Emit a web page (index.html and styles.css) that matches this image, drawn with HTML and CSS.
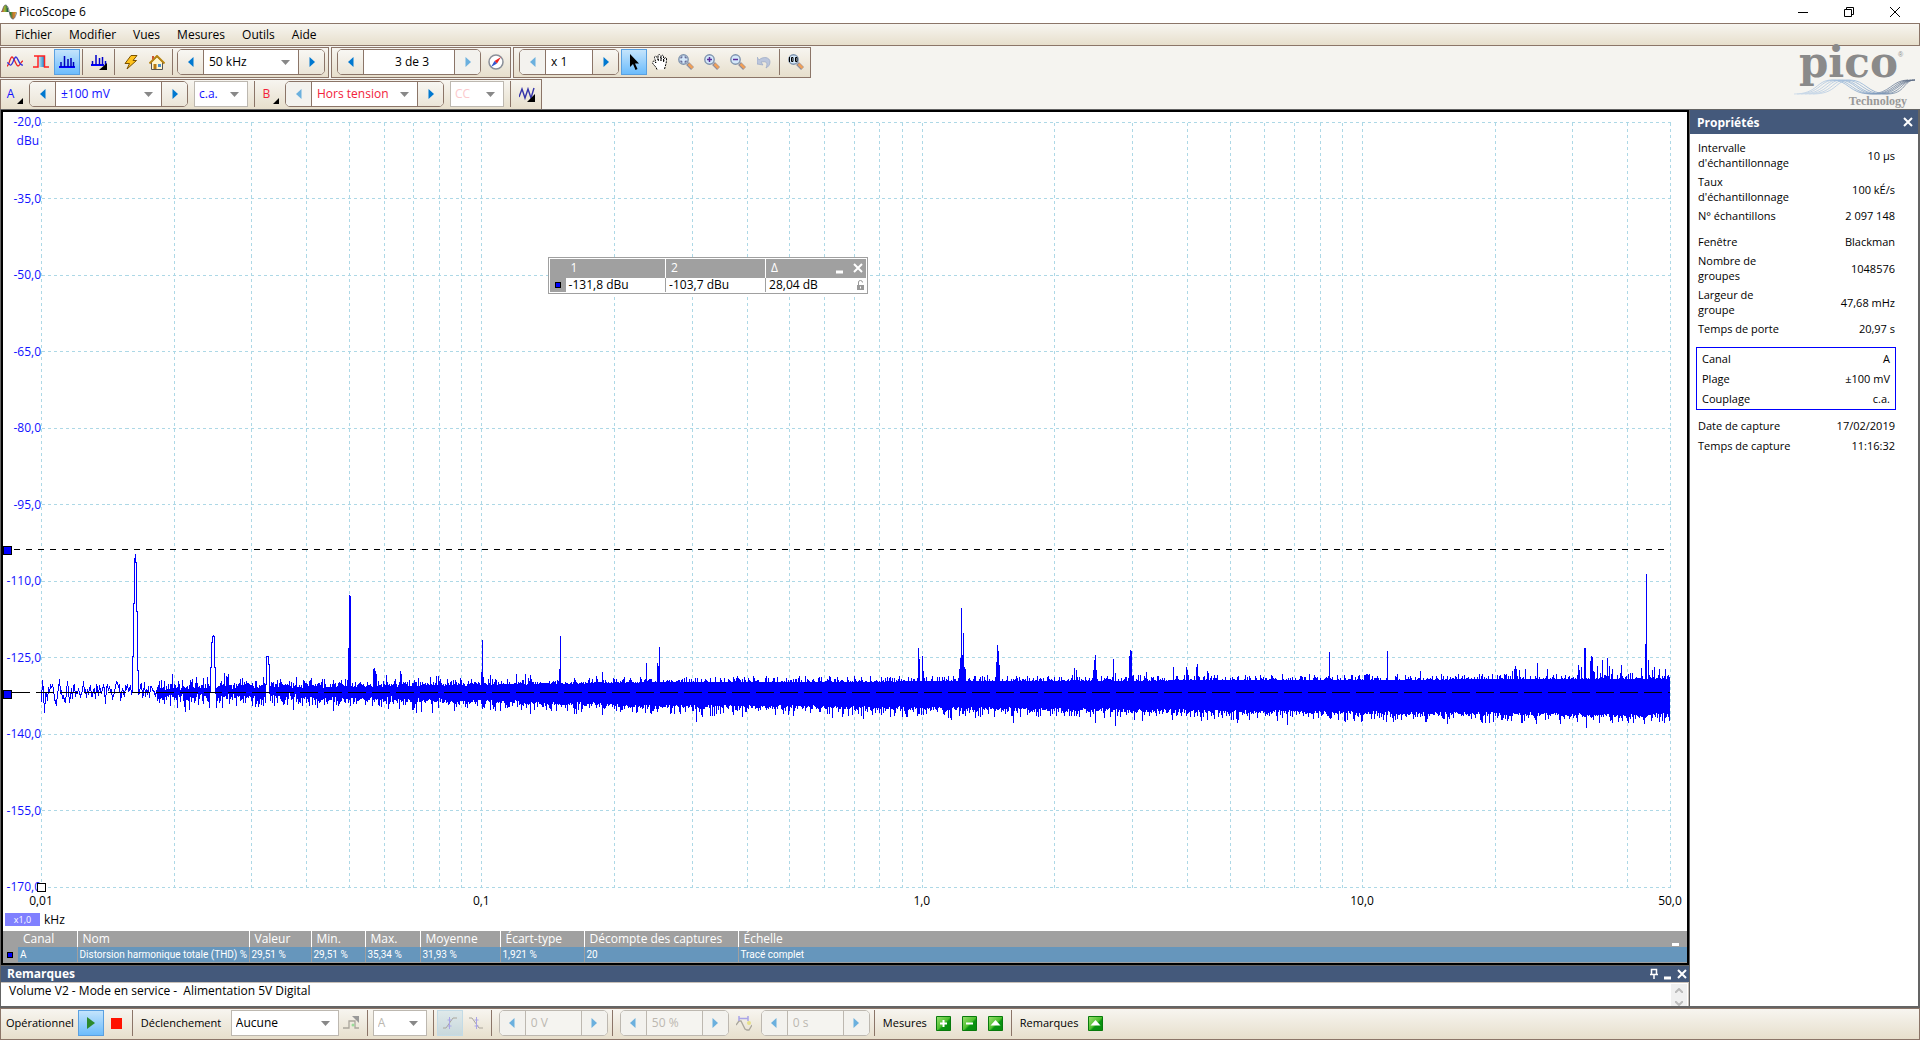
FILE: index.html
```
<!DOCTYPE html>
<html lang="fr">
<head>
<meta charset="utf-8">
<link rel="stylesheet" href="styles.css">
<title>PicoScope 6</title>
</head>
<body>
<svg width="0" height="0" class="defs">
  <defs>
    <linearGradient id="rainbow">
      <stop offset="0" stop-color="#d33"/><stop offset=".25" stop-color="#9b3"/><stop offset=".45" stop-color="#154"/>
      <stop offset=".6" stop-color="#283"/><stop offset=".8" stop-color="#c73"/><stop offset="1" stop-color="#c9a227"/>
    </linearGradient>
    <linearGradient id="green" x2="1" y2="1">
      <stop offset="0" stop-color="#9be070"/><stop offset=".5" stop-color="#4fc030"/><stop offset=".6" stop-color="#0a9410"/><stop offset="1" stop-color="#088c0c"/>
    </linearGradient>
    <linearGradient id="pulse"><stop offset="0" stop-color="#fff"/><stop offset="1" stop-color="#1f8fd0"/></linearGradient>
    <linearGradient id="swoosh"><stop offset="0" stop-color="#c8d8e8"/><stop offset=".5" stop-color="#8fb0d4"/><stop offset="1" stop-color="#5c6a82"/></linearGradient>
    <symbol id="lens" viewBox="0 0 16 16">
      <path d="M9.500 9.500l5 5" stroke="#8c8c9c" stroke-width="4"/>
      <path d="M10.500 10l4 4" stroke="#f0a058" stroke-width="2.500"/>
      <circle cx="5.500" cy="5.500" r="4.700" fill="#d4e8fa" stroke="#7f93ad" stroke-width="1.400"/>
    </symbol>
    <symbol id="left" viewBox="0 0 6 10"><path d="M5.500 0v10L0 5z" fill="currentColor"/></symbol>
    <symbol id="right" viewBox="0 0 6 10"><path d="M.5 0v10L6 5z" fill="currentColor"/></symbol>
  </defs>
</svg>

<div class="titlebar">
  <svg width="16" height="16" viewBox="0 0 16 16"><path d="M0 8C2 7 2 1 4.500 1S7.500 8 8 8h7.500c-1 0-1 7-3.500 7S8.500 8 8 8z" fill="url(#rainbow)"/><path d="M0 8C2 7 2 1 4.500 1S8 6 8.500 9s1.500 6 3.500 6 3-5 4-7" fill="none" stroke="#556" stroke-width=".7"/></svg>
  <h1>PicoScope 6</h1>
  <div class="window-buttons">
    <button aria-label="Réduire"><svg width="12" height="12"><path d="M1 6.500h10" stroke="#000"/></svg></button>
    <button aria-label="Restaurer"><svg width="12" height="12"><path d="M1.500 3.500h7v7h-7zM3.500 3V1.500h7v7H9" fill="none" stroke="#000"/></svg></button>
    <button aria-label="Fermer"><svg width="12" height="12"><path d="M1 1l10 10M11 1L1 11" stroke="#000"/></svg></button>
  </div>
</div>

<nav class="menubar">
  <a href="#">Fichier</a>
  <a href="#">Modifier</a>
  <a href="#">Vues</a>
  <a href="#">Mesures</a>
  <a href="#">Outils</a>
  <a href="#">Aide</a>
</nav>

<header class="toolbars">
  <div class="rows">
    <div class="row">
      <div class="toolbar">
        <button class="tool" aria-label="Mode oscilloscope"><svg width="16" height="12"><path d="M0 10C2 10 3 1 5 1s4 9 6 9 3-5 5-5" fill="none" stroke="#e22" stroke-width="1.300"/><path d="M0 7C2 6 2 10 4 9S7 1 9 1s3 9 7 8" fill="none" stroke="#33d" stroke-width="1.300"/></svg></button>
        <button class="tool" aria-label="Mode persistance"><svg width="16" height="14"><path d="M4 1h7v11H5z" fill="url(#pulse)"/><path d="M0 12h5V1H1M4 1h7.500v11H16" fill="none" stroke="#f22" stroke-width="1.500"/></svg></button>
        <button class="tool on" aria-label="Mode spectre"><svg width="16" height="14"><path d="M0 12h16" stroke="#00f" stroke-width="2"/><path d="M2 12V7M5.500 12V1M9 12V4M12 12V3M14.500 12V7" stroke="#00b" stroke-width="1.500"/></svg></button>
        <i class="sep"></i>
        <button class="tool" aria-label="Options du spectre"><svg width="17" height="15"><path d="M0 10h13" stroke="#00f" stroke-width="2"/><path d="M1.500 10V6M5 10V0M8.500 10V3M11.500 10V2M14.500 10V6" stroke="#00c" stroke-width="1.500"/><path d="M16 8v7H8z" fill="#000"/></svg></button>
        <i class="sep"></i>
        <button class="tool" aria-label="Configuration automatique"><svg width="14" height="15"><path d="M7 .5h6L9 5.500h3.500L3 14l2.500-5.500H1z" fill="#ffc21c" stroke="#7a5200"/></svg></button>
        <button class="tool" aria-label="Accueil"><svg width="16" height="15"><path d="M2.500 7v7.500h11V7L8 1.500z" fill="#fff6cf" stroke="#555"/><path d="M.5 8.500L8 1l7.500 7.500" fill="none" stroke="#b88510" stroke-width="2"/><path d="M3 5V1h2v2" fill="#c53"/><path d="M4.500 9h3v5h-3z" fill="#b77a10"/><path d="M9 9h3v3H9z" fill="#4a90d0"/></svg></button>
        <i class="sep"></i>
        <div class="spin">
          <button aria-label="Précédent"><svg width="6" height="10"><use href="#left"/></svg></button>
          <select class="w-range" aria-label="Plage de fréquences"><option>50 kHz</option></select>
          <button aria-label="Suivant"><svg width="6" height="10"><use href="#right"/></svg></button>
        </div>
      </div>
      <div class="toolbar">
        <div class="spin">
          <button aria-label="Tampon précédent"><svg width="6" height="10"><use href="#left"/></svg></button>
          <input class="w-buffer" type="text" value="3 de 3" aria-label="Tampon">
          <button disabled aria-label="Tampon suivant"><svg width="6" height="10"><use href="#right"/></svg></button>
        </div>
        <button class="tool" aria-label="Navigateur de tampons"><svg width="16" height="16"><circle cx="8" cy="8" r="7" fill="#fff" stroke="#8a8f98" stroke-width="1.500"/><path d="M13 3L9 9.500 6.500 7z" fill="#e22"/><path d="M3 13l3.500-6L9 9.500z" fill="#35c"/></svg></button>
      </div>
      <div class="toolbar">
        <div class="spin">
          <button disabled aria-label="Zoom précédent"><svg width="6" height="10"><use href="#left"/></svg></button>
          <input class="w-zoom" type="text" value="x 1" aria-label="Zoom">
          <button aria-label="Zoom suivant"><svg width="6" height="10"><use href="#right"/></svg></button>
        </div>
        <button class="tool on" aria-label="Sélection"><svg width="10" height="16"><path d="M1 0v13l3-3 2.500 6 2-1L6 9.500h4z" fill="#000"/></svg></button>
        <button class="tool" aria-label="Main"><svg width="16" height="17"><path d="M5 15.500C4 12 .5 10.500.5 8.500S2.500 7 4 9L2.500 3.500c0-2 2-1.500 2.500 0L6.500 7 6 2c0-2 2-2 2.500 0L9 7l.5-4.500c.5-2 2-1.500 2 0V8l1-3.500c.5-1.500 2-1 2 .5C14.500 10 13 12 12.500 15.500" fill="#fff" stroke="#000" stroke-dasharray="2 1"/></svg></button>
        <button class="tool" aria-label="Zoom fenêtre"><svg width="16" height="16"><use href="#lens"/><path d="M4.500 3H3v1.500M3 6.500V8h1.500M6.500 3H8v1.500M8 6.500V8H6.500" fill="none" stroke="#447"/></svg></button>
        <button class="tool" aria-label="Zoom avant"><svg width="16" height="16"><use href="#lens"/><path d="M3 5.500h5M5.500 3v5" stroke="#5a2d9a" stroke-width="1.500"/></svg></button>
        <button class="tool" aria-label="Zoom arrière"><svg width="16" height="16"><use href="#lens"/><path d="M3 5.500h5" stroke="#5a2d9a" stroke-width="1.500"/></svg></button>
        <button class="tool" disabled aria-label="Annuler le zoom"><svg width="15" height="14"><path d="M2 5c4-4 11-3 11 2 0 3-2 5-4 6 2-5 1-7-5-6l2 3-6-1V2z" fill="#bcc6dc" stroke="#9aa8c4" stroke-width=".7"/></svg></button>
        <i class="sep"></i>
        <button class="tool" aria-label="Zoom 100 %"><svg width="16" height="16"><use href="#lens"/><path d="M1.500 3v5M3.500 3.500h1.500v4H3.500zM7.500 3.500H9v4H7.500z" fill="none" stroke="#000"/></svg></button>
      </div>
    </div>
    <div class="row">
      <div class="toolbar">
        <button class="channel a">A<i></i></button>
        <div class="spin">
          <button aria-label="Plage A inférieure"><svg width="6" height="10"><use href="#left"/></svg></button>
          <select class="w-channel a" aria-label="Plage A"><option>±100 mV</option></select>
          <button aria-label="Plage A supérieure"><svg width="6" height="10"><use href="#right"/></svg></button>
        </div>
        <select class="box w-coupling a" aria-label="Couplage A"><option>c.a.</option></select>
        <i class="sep"></i>
        <button class="channel b">B<i></i></button>
        <div class="spin">
          <button disabled aria-label="Plage B inférieure"><svg width="6" height="10"><use href="#left"/></svg></button>
          <select class="w-channel b" aria-label="Plage B"><option>Hors tension</option></select>
          <button aria-label="Plage B supérieure"><svg width="6" height="10"><use href="#right"/></svg></button>
        </div>
        <select class="box w-coupling b" disabled aria-label="Couplage B"><option>CC</option></select>
        <i class="sep"></i>
        <button class="tool" aria-label="Générateur de signaux"><svg width="17" height="15"><path d="M0 10L3 2l3 9 3-9 3 9 3-10" fill="none" stroke="#33a" stroke-width="1.400"/><path d="M16 7v8H8z" fill="#000"/></svg></button>
      </div>
    </div>
  </div>
  <div class="logo">
    <div class="brand">pico<sup>®</sup></div>
    <svg width="122" height="16" viewBox="0 0 122 16" fill="none" stroke="url(#swoosh)" stroke-width=".8">
      <path d="M0 15c24 0 22-14 38-14s18 14 38 14 22-14 38-14"/>
      <path d="M3 15c24 0 22-14 38-14s18 14 38 14 22-14 38-14"/>
      <path d="M7 15c24 0 22-14 38-14s18 14 37 14 22-14 37-14"/>
      <path d="M11 15c24 0 22-14 37-14s18 14 37 14 20-14 36-14"/>
      <path d="M15 15c24 0 22-14 37-14s18 14 37 14 18-14 32-14"/>
      <path d="M19 15c24 0 22-14 37-14s18 14 37 14 16-14 28-14"/>
    </svg>
    <div class="sub">Technology</div>
  </div>
</header>

<main>
  <div class="left">
    <section class="scope">
      <div class="chart">
        <div class="y-axis">
          <span>-20,0</span><span>-35,0</span><span>-50,0</span><span>-65,0</span><span>-80,0</span><span>-95,0</span><span>-110,0</span><span>-125,0</span><span>-140,0</span><span>-155,0</span><span>-170,0</span>
          <em>dBu</em>
          <b class="ruler-handle" style="top: 55.800%"></b>
          <b class="ruler-handle" style="top: 74.200%"></b>
        </div>
        <div class="plot">
          <svg id="spectrum" viewBox="0 0 1629 765" preserveAspectRatio="none">
            <g id="grid"></g>
            <path id="trace"></path>
            <path class="ruler r1" d="M-27 427.500H1629"/>
            <path class="ruler r2" d="M-29 570.500H1629"/>
          </svg>
          <b class="zoom-handle"></b>
          <div class="legend">
            <table>
              <tr><th class="mark"></th><th>1</th><th>2</th><th>
                <div class="cell"><span>Δ</span>
                <button aria-label="Réduire la légende"><svg width="8" height="12"><path d="M0 10h7" stroke="#fff" stroke-width="3"/></svg></button>
                <button aria-label="Fermer la légende"><svg width="10" height="10"><path d="M1 1l8 8M9 1L1 9" stroke="#fff" stroke-width="2"/></svg></button></div></th></tr>
              <tr><td class="mark"><i></i></td><td>-131,8 dBu</td><td>-103,7 dBu</td><td>
                <div class="cell"><span>28,04 dB</span>
                <svg width="8" height="10"><path d="M0 5h7v5H0z" fill="#999"/><path d="M1.500 5V2q0-1.500 2-1.500t2 2" fill="none" stroke="#999"/><path d="M3 6.500h1v2H3z" fill="#fff"/></svg></div></td></tr>
            </table>
          </div>
        </div>
      </div>
      <div class="x-axis">
        <span style="left: 0">0,01</span><span style="left: 27.030%">0,1</span><span style="left: 54.070%">1,0</span><span style="left: 81.100%">10,0</span><span style="left: 100%">50,0</span>
      </div>
      <div class="units"><span class="scale">x1,0</span><span>kHz</span></div>
      <table class="measures">
        <tr><th class="mark"></th><th class="c1">Canal</th><th class="c2">Nom</th><th class="c3">Valeur</th><th class="c4">Min.</th><th class="c5">Max.</th><th class="c6">Moyenne</th><th class="c7">Écart-type</th><th class="c8">Décompte des captures</th><th>Échelle<button aria-label="Réduire les mesures"></button></th></tr>
        <tr><td class="mark"><i></i></td><td>A</td><td>Distorsion harmonique totale (THD) %</td><td>29,51 %</td><td>29,51 %</td><td>35,34 %</td><td>31,93 %</td><td>1,921 %</td><td>20</td><td>Tracé complet</td></tr>
      </table>
    </section>
    <section class="notes">
      <div class="panel-title">
        <h2>Remarques</h2>
        <button aria-label="Épingler"><svg width="10" height="12"><path d="M2.500 6V1.500h5V6M1 6.500h8M5 7v4" fill="none" stroke="#fff" stroke-width="1.500"/></svg></button>
        <button aria-label="Réduire"><svg width="8" height="12"><path d="M0 10h7" stroke="#fff" stroke-width="3"/></svg></button>
        <button aria-label="Fermer"><svg width="10" height="10"><path d="M1 1l8 8M9 1L1 9" stroke="#fff" stroke-width="2"/></svg></button>
      </div>
      <div class="note-body">
        <textarea aria-label="Remarques" spellcheck="false">Volume V2 - Mode en service -  Alimentation 5V Digital</textarea>
        <div class="scroll">
          <svg width="8" height="5"><path d="M0 5l4-4 4 4" fill="none" stroke="#bbb" stroke-width="2"/></svg>
          <svg width="8" height="5"><path d="M0 0l4 4 4-4" fill="none" stroke="#bbb" stroke-width="2"/></svg>
        </div>
      </div>
    </section>
  </div>
  <aside class="props">
    <div class="panel-title">
      <h2>Propriétés</h2>
      <button aria-label="Fermer"><svg width="10" height="10"><path d="M1 1l8 8M9 1L1 9" stroke="#fff" stroke-width="2"/></svg></button>
    </div>
    <dl>
      <div><dt>Intervalle d'échantillonnage</dt><dd>10 µs</dd></div>
      <div><dt>Taux d'échantillonnage</dt><dd>100 kÉ/s</dd></div>
      <div><dt>N° échantillons</dt><dd>2 097 148</dd></div>
    </dl>
    <dl>
      <div><dt>Fenêtre</dt><dd>Blackman</dd></div>
      <div><dt>Nombre de groupes</dt><dd>1048576</dd></div>
      <div><dt>Largeur de<br>groupe</dt><dd>47,68 mHz</dd></div>
      <div><dt>Temps de porte</dt><dd>20,97 s</dd></div>
    </dl>
    <dl class="channel-box">
      <div><dt>Canal</dt><dd>A</dd></div>
      <div><dt>Plage</dt><dd>±100 mV</dd></div>
      <div><dt>Couplage</dt><dd>c.a.</dd></div>
    </dl>
    <dl class="dates">
      <div><dt>Date de capture</dt><dd>17/02/2019</dd></div>
      <div><dt>Temps de capture</dt><dd>11:16:32</dd></div>
    </dl>
  </aside>
</main>

<footer class="bottombar">
  <span class="label">Opérationnel</span>
  <button class="tool on" aria-label="Démarrer"><svg width="9" height="12"><path d="M1 0v12l8-6z" fill="#2c8a2c"/></svg></button>
  <button class="tool" aria-label="Arrêter"><svg width="11" height="11"><path d="M0 0h11v11H0z" fill="#f10"/></svg></button>
  <i class="sep"></i>
  <label class="label trigger-label" for="trigger">Déclenchement</label>
  <select id="trigger" class="box w-trigger"><option>Aucune</option></select>
  <button class="tool" disabled aria-label="Déclenchement avancé"><svg width="17" height="16"><path d="M9 1h7v7z" fill="#999"/><path d="M0 13h6V6h6v7h4" fill="none" stroke="#aaa69c" stroke-width="1.300"/><circle cx="10" cy="10" r="1.500" fill="#9d9"/></svg></button>
  <i class="sep"></i>
  <select class="box w-source" disabled aria-label="Source"><option>A</option></select>
  <i class="sep"></i>
  <button class="tool on" disabled aria-label="Front montant"><svg width="14" height="14"><path d="M0 12h3L10 2h4" fill="none" stroke="#aaa69c"/><path d="M6.500 1v12M4.500 4h4M4.500 10h4" stroke="#a9a4e8"/></svg></button>
  <button class="tool" disabled aria-label="Front descendant"><svg width="14" height="14"><path d="M0 2h3l7 10h4" fill="none" stroke="#aaa69c"/><path d="M7.500 1v12M5.500 4h4M5.500 10h4" stroke="#a9a4e8"/></svg></button>
  <i class="sep"></i>
  <div class="spin">
    <button disabled aria-label="Diminuer le seuil"><svg width="6" height="10"><use href="#left"/></svg></button>
    <input class="w-level" type="text" value="0 V" disabled aria-label="Seuil">
    <button disabled aria-label="Augmenter le seuil"><svg width="6" height="10"><use href="#right"/></svg></button>
  </div>
  <i class="sep"></i>
  <div class="spin">
    <button disabled aria-label="Diminuer le pré-déclenchement"><svg width="6" height="10"><use href="#left"/></svg></button>
    <input class="w-level" type="text" value="50 %" disabled aria-label="Pré-déclenchement">
    <button disabled aria-label="Augmenter le pré-déclenchement"><svg width="6" height="10"><use href="#right"/></svg></button>
  </div>
  <button class="tool" disabled aria-label="Retard"><svg width="16" height="15"><path d="M0 9l3-4 2 0 4 8 2 1 2 0 3-5" fill="none" stroke="#aaa69c" stroke-width="1.300"/><path d="M3 2.500h9M3 0v5M12 0v5" stroke="#a9a4e8" stroke-width="1.500"/><circle cx="13" cy="7" r="2" fill="#e6e08a"/></svg></button>
  <div class="spin">
    <button disabled aria-label="Diminuer le retard"><svg width="6" height="10"><use href="#left"/></svg></button>
    <input class="w-level" type="text" value="0 s" disabled aria-label="Retard">
    <button disabled aria-label="Augmenter le retard"><svg width="6" height="10"><use href="#right"/></svg></button>
  </div>
  <i class="sep"></i>
  <span class="label">Mesures</span>
  <button class="tool" aria-label="Ajouter une mesure"><svg width="15" height="15"><path d="M.5.5h14v14H.5z" fill="url(#green)" stroke="#087a0c"/><path d="M7.500 4v7M4 7.500h7" stroke="#fff" stroke-width="2"/></svg></button>
  <button class="tool" aria-label="Supprimer une mesure"><svg width="15" height="15"><path d="M.5.5h14v14H.5z" fill="url(#green)" stroke="#087a0c"/><path d="M4 7.500h7" stroke="#fff" stroke-width="2"/></svg></button>
  <button class="tool" aria-label="Modifier une mesure"><svg width="15" height="15"><path d="M.5.5h14v14H.5z" fill="url(#green)" stroke="#087a0c"/><path d="M7.500 4l5 5.500h-10z" fill="#fff"/></svg></button>
  <i class="sep"></i>
  <span class="label">Remarques</span>
  <button class="tool" aria-label="Afficher les remarques"><svg width="15" height="15"><path d="M.5.5h14v14H.5z" fill="url(#green)" stroke="#087a0c"/><path d="M7.500 4l5 5.500h-10z" fill="#fff"/></svg></button>
</footer>
<script src="spectrum.js"></script>
</body>
</html>
```
FILE: styles.css
```
* {
	box-sizing: border-box;
}
body {
	margin: 0;
	height: 100vh;
	display: flex;
	flex-direction: column;
	overflow: hidden;
	font: 12px/16px "Open Sans", "Noto Sans", sans-serif;
	color: #000;
	background: #f5f4f0;
}
button, input, select, textarea {
	font: inherit;
	color: inherit;
	margin: 0;
	padding: 0;
	border: 0;
	border-radius: 0;
	background: none;
}
button {
	display: flex;
	align-items: center;
	justify-content: center;
}
h1, h2, dl, dd {
	margin: 0;
}
.defs {
	position: absolute;
}

/* window frame */
.titlebar {
	display: flex;
	align-items: center;
	gap: 2px;
	height: 23px;
	padding: 0 2px 0 1px;
	background: #fff;
}
.titlebar h1 {
	flex: 1;
	font-size: 12px;
	font-weight: normal;
}
.window-buttons {
	display: flex;
}
.window-buttons button {
	width: 46px;
	height: 22px;
}
.menubar {
	display: flex;
	align-items: center;
	gap: 17px;
	height: 23px;
	padding-left: 14px;
	border: 1px solid #8b7568;
	background: linear-gradient(#f7f5f0, #e7dfcc);
}
.menubar a {
	color: #000;
	text-decoration: none;
}

/* toolbars */
.toolbars {
	display: flex;
	justify-content: space-between;
	height: 63px;
	padding-top: 1px;
}
.rows {
	display: flex;
	flex-direction: column;
	gap: 1px;
}
.row {
	display: flex;
	gap: 2px;
}
.toolbar {
	display: flex;
	align-items: flex-start;
	height: 31px;
	padding: 1px 1px 0;
	border: 1px solid #8b7568;
	background: linear-gradient(#f7f5f0, #e7dfcc);
}
.tool {
	width: 26px;
	height: 26px;
	flex: none;
}
.tool.on {
	border: 1px solid #5aa0e0;
	background: linear-gradient(#c4e4fc, #6cbcfc);
}
.tool.on:disabled {
	border-color: #c3dbe6;
	background: linear-gradient(#dfe9ea, #c8d8dc);
}
.sep {
	flex: none;
	width: 6px;
	height: 26px;
	border-left: 2px solid transparent;
	background: linear-gradient(#8b7568, #8b7568) 0 0 / 1px 100% no-repeat;
}
.spin {
	display: flex;
	flex: none;
	height: 26px;
	margin: 0 2px 0 1px;
	border: 1px solid #8b7568;
	border-radius: 5px;
	overflow: hidden;
	background: #fff;
}
.spin:first-child {
	margin-left: 4px;
}
.spin button {
	width: 25px;
	color: #0078d0;
	background: linear-gradient(#f8f7f3, #ebe5d8);
}
.spin button:disabled {
	color: #6bb0de;
	background: #f3f2ee;
}
.spin input, .spin select {
	padding-left: 5px;
	border: solid #8b7568;
	border-width: 0 1px;
}
select {
	appearance: none;
	opacity: 1;
	background: #fff url("data:image/svg+xml,%3Csvg xmlns='http://www.w3.org/2000/svg' width='9' height='5'%3E%3Cpath d='M0 0h9L4.500 5z' fill='%23888'/%3E%3C/svg%3E") no-repeat right 8px center;
}
.box {
	height: 26px;
	padding-left: 4px;
	border: 1px solid #bdb8b0;
}
.toolbar .box {
	margin: 0 4px;
}
.w-range { width: 96px; }
.spin .w-buffer { width: 92px; padding-left: 31px; }
.w-zoom { width: 48px; }
.w-channel { width: 107px; }
.w-coupling { width: 54px; }
.w-trigger { width: 108px; }
.w-source { width: 54px; }
.w-level { width: 57px; }
.a { color: #11f; }
.b { color: #f2223a; }
.b:disabled { color: #fcc9cc; }
.channel {
	width: 26px;
	height: 26px;
	gap: 3px;
}
.channel i {
	align-self: flex-end;
	margin-bottom: 3px;
	border: 3px solid #000;
	border-top-color: transparent;
	border-left-color: transparent;
}
.logo {
	width: 126px;
	color: #8a8a8a;
}
.logo svg {
	display: block;
}
.brand {
	height: 32px;
	padding-left: 5px;
	font: bold 42px/32px "DejaVu Serif", serif;
	white-space: nowrap;
}
.brand sup {
	font: 7px/8px "Liberation Sans", sans-serif;
	vertical-align: 20px;
}
.sub {
	padding-right: 13px;
	text-align: right;
	font: bold 12px/12px "Liberation Serif", serif;
	color: #999;
}

/* work area */
main {
	flex: 1;
	display: flex;
	min-height: 0;
	padding: 1px 2px 2px 1px;
	gap: 1px;
	background: #646464;
}
.left {
	flex: 1;
	min-width: 0;
	display: flex;
	flex-direction: column;
	gap: 1px;
}
.scope {
	flex: 1;
	display: flex;
	flex-direction: column;
	border: 2px solid #000;
	background: #fff;
}
.chart {
	flex: 1;
	display: flex;
	padding: 10px 17px 0 0;
}
.y-axis {
	position: relative;
	width: 38px;
	margin: -8px 0;
	display: flex;
	flex-direction: column;
	justify-content: space-between;
	text-align: right;
	color: #11f;
}
.y-axis em {
	position: absolute;
	right: 2px;
	top: 19px;
	font-style: normal;
}
.ruler-handle, .zoom-handle {
	position: absolute;
	z-index: 1;
	width: 9px;
	height: 9px;
	border: 1px solid #000;
	background: #00f;
}
.ruler-handle {
	left: 0;
	margin-top: -4px;
}
.zoom-handle {
	left: -4px;
	bottom: -5px;
	background: #fff;
}
.plot {
	position: relative;
	flex: 1;
}
#spectrum {
	position: absolute;
	width: 100%;
	height: 100%;
	overflow: visible;
	shape-rendering: crispEdges;
}
#spectrum path {
	fill: none;
	vector-effect: non-scaling-stroke;
}
#grid path {
	stroke: #add8e6;
	stroke-dasharray: 3 3;
}
#trace {
	stroke: #00f;
}
.ruler {
	stroke: #000;
}
.r1 {
	stroke-dasharray: 6 6;
}
.r2 {
	stroke-dasharray: 18 6;
}

/* floating ruler legend */
.legend {
	position: absolute;
	left: 31.100%;
	top: 17.700%;
	border: 1px solid #a0a0a0;
	padding: 1px;
	background: #fff;
}
.legend table {
	border-collapse: collapse;
	width: 316px;
	table-layout: fixed;
	line-height: 14px;
}
.legend th {
	height: 19px;
	padding: 1px 0 2px 5px;
	text-align: left;
	font-weight: normal;
	color: #fff;
	background: #a0a0a0;
}
.legend th + th + th {
	border-left: 1px solid #fff;
}
.legend td {
	height: 14px;
	padding: 0 0 0 3px;
}
.legend td + td + td {
	border-left: 1px solid #a0a0a0;
}
.legend .mark {
	width: 16px;
	padding: 0 5px;
	background: #a0a0a0;
}
.mark i {
	display: block;
	width: 6px;
	height: 6px;
	border: 1px solid #000;
	background: #00f;
}
.cell {
	display: flex;
	align-items: center;
	gap: 9px;
	height: 14px;
	padding-right: 3px;
}
.cell span {
	flex: 1;
}
.legend td .cell {
	padding-right: 1px;
}

/* axis under the plot */
.x-axis {
	position: relative;
	height: 25px;
	margin: 0 17px 0 38px;
}
.x-axis span {
	position: absolute;
	top: 6px;
	width: 40px;
	margin-left: -20px;
	text-align: center;
}
.units {
	display: flex;
	align-items: center;
	gap: 4px;
	height: 19px;
	padding: 0 0 4px 2px;
}
.scale {
	width: 35px;
	height: 13px;
	text-align: center;
	font-size: 9px;
	line-height: 13px;
	color: #fff;
	background: #8080ff;
}

/* measurements */
.measures {
	width: 100%;
	table-layout: fixed;
	border-collapse: collapse;
	color: #fff;
	white-space: nowrap;
	background: #a0a0a0;
}
.measures th {
	height: 16px;
	padding: 0 0 0 5px;
	text-align: left;
	font-weight: normal;
	line-height: 16px;
}
.measures th + th + th {
	border-left: 1px solid #fff;
}
.measures td {
	height: 15px;
	padding: 0 0 0 2px;
	font: 10px/15px Roboto, sans-serif;
	background: #6696bc;
}
.measures td + td + td {
	border-left: 1px solid #a0a0a0;
}
.measures tr + tr {
	border-bottom: 1px solid #a0a0a0;
}
.measures .mark {
	width: 15px;
	padding: 0 4px;
	background: #a0a0a0;
}
.measures button {
	float: right;
	width: 7px;
	height: 3px;
	margin: 12px 8px 0 0;
	background: #fff;
}
.c1 { width: 59px; }
.c2 { width: 172px; }
.c3 { width: 62px; }
.c4 { width: 54px; }
.c5 { width: 55px; }
.c6 { width: 80px; }
.c7 { width: 84px; }
.c8 { width: 154px; }

/* docked panels */
.panel-title {
	display: flex;
	align-items: center;
	gap: 5px;
	padding: 0 2px 0 6px;
	height: 16px;
	color: #fff;
	background: #44597b;
}
.panel-title h2 {
	flex: 1;
	font-size: 12px;
	font-weight: bold;
}
.note-body {
	display: flex;
	height: 24px;
	border: 1px solid #c8c0b8;
	border-width: 1px 1px 0 0;
	background: #fff;
}
.note-body textarea {
	flex: 1;
	padding: 0 8px;
	resize: none;
	overflow: hidden;
	white-space: pre;
}
.scroll {
	width: 16px;
	margin: 1px 1px 0;
	padding-top: 4px;
	display: flex;
	flex-direction: column;
	align-items: center;
	gap: 8px;
	overflow: hidden;
	background: #f0f0f0;
}
.props {
	width: 228px;
	font-size: 11px;
	line-height: 15px;
	background: #fff;
}
.props .panel-title {
	height: 24px;
	margin-bottom: 6px;
	padding: 0 5px 0 7px;
}
.props dl {
	display: flex;
	flex-direction: column;
	gap: 4px;
	margin: 0 23px 11px 8px;
}
.props dl div {
	display: flex;
	align-items: center;
	justify-content: space-between;
}
.props dt {
	width: 100px;
}
.props .channel-box {
	gap: 5px;
	margin: 0 22px 8px 6px;
	padding: 3px 5px;
	border: 1px solid #00f;
}
.props .dates {
	gap: 5px;
}

/* trigger bar */
.bottombar {
	display: flex;
	align-items: flex-start;
	height: 32px;
	padding-top: 1px;
	border: 1px solid #8b7568;
	background: linear-gradient(#f7f5f0, #e7dfcc);
}
.label {
	padding: 0 4px 0 5px;
	font-size: 11px;
	line-height: 26px;
}
.trigger-label {
	width: 95px;
}
.bottombar .spin {
	margin: 0 2px 0 4px;
	border-color: #bdb8b0;
}
.bottombar .spin input {
	border-color: #bdb8b0;
	background: #f5f4f0;
	color: #bcb8b0;
}
.w-source {
	margin: 0 4px 0 2px;
	color: #bcb8b0;
}
```
FILE: spectrum.js
```
var WIDTH = 1629, HEIGHT = 765;
var DECADE = WIDTH / (Math.log(5000) / Math.LN10);

/* Dashed grid: every 15 dB, and the log divisions from 10 Hz to 50 kHz. */
function draw_grid() {
    var d = "";
    for (var y = 0; y <= 10; y++)
        d += line(0, Math.floor(y * 76.5), WIDTH, Math.floor(y * 76.5));
    for (var decade = 0; decade < 4; decade++) {
        for (var n = 1; n < 10; n++) {
            var x = Math.round((decade + Math.log(n) / Math.LN10) * DECADE);
            if (x <= WIDTH)
                d += line(x, 0, x, HEIGHT);
        }
    }
    document.getElementById("grid").innerHTML = d;
}

function line(x1, y1, x2, y2) {
    return '<path d="M' + (x1 + 0.5) + " " + (y1 + 0.5) + "L" + (x2 + 0.5) + " " + (y2 + 0.5) + '"/>';
}

/* Small seeded generator, so that the noise is the same on each load. */
var seed = 20190217;
function random() {
    seed = (seed * 16807) % 2147483647;
    return seed / 2147483647;
}

/* Peaks above the noise floor: column, top. */
var PEAKS = {
    91: 534, 92: 481, 93: 440, 94: 432, 95: 440, 96: 489, 97: 548,
    169: 545, 170: 520, 171: 515, 172: 513, 173: 514, 174: 545,
    225: 545, 226: 534, 227: 534, 228: 542,
    308: 473, 309: 474, 332: 547, 333: 546, 334: 549, 335: 552, 359: 549, 360: 552,
    441: 518, 519: 514, 605: 541, 616: 541, 617: 544, 618: 525,
    877: 526, 878: 537, 881: 534, 882: 549,
    918: 547, 920: 486, 921: 533, 922: 511, 923: 545, 924: 547,
    955: 540, 956: 523, 957: 529, 958: 543, 1033: 546, 1035: 548,
    1052: 548, 1053: 538, 1054: 533, 1055: 548, 1072: 537, 1074: 551,
    1088: 534, 1089: 528, 1090: 529, 1099: 553, 1105: 550,
    1132: 545, 1145: 545, 1146: 548, 1155: 545, 1156: 542, 1166: 549, 1167: 551,
    1288: 530, 1346: 529, 1379: 549, 1471: 549, 1473: 547, 1474: 544, 1475: 547,
    1478: 548, 1484: 547, 1496: 541, 1506: 547, 1537: 543, 1538: 548, 1540: 545,
    1543: 526, 1544: 526, 1549: 539, 1550: 534, 1551: 535, 1552: 549, 1553: 550,
    1556: 544, 1561: 538, 1566: 536, 1568: 544, 1571: 547, 1580: 543, 1600: 546,
    1605: 452, 1607: 538, 1611: 548, 1613: 545, 1618: 547, 1624: 547
};

function draw_trace() {
    var d = "M0 568";
    for (var x = 0; x < WIDTH; x++) {
        /* more FFT bins share each column as the frequency rises */
        var loose = Math.max(0, 1 - x / 600);
        var high = Math.max(0, Math.min(1, (x - 450) / 1100));
        var top = 561 - 4 * high - 6 * Math.pow(random(), 3) + 10 * loose * random()
            - (random() < 0.15 * loose ? 7 : 0);
        var bottom = 582 + 11 * high - 5 * loose - 10 * loose * random()
            + 9 * Math.pow(random(), 4) + 4 * (random() - 0.5) + (random() < 0.04 + 0.08 * loose ? 7 : 0);
        var rising = x < 94 || (x > 150 && x < 172);
        if (PEAKS[x]) {
            top = PEAKS[x];
            if (x < 300)
                bottom = rising ? (PEAKS[x - 1] || 570) : (PEAKS[x + 1] || 572);
        }
        /* at the left the curve is sparse enough to be one wandering line */
        if (x < 115 && !PEAKS[x]) {
            var y = 569 + 14 * (random() + random() - 1) + (random() < 0.07 ? 12 : 0);
            d += "L" + (x + 0.5) + " " + Math.round(y);
        } else if (rising) {
            d += "L" + (x + 0.5) + " " + Math.round(bottom) + "V" + Math.round(top);
        } else {
            d += "L" + (x + 0.5) + " " + Math.round(top) + "V" + Math.round(bottom);
        }
    }
    document.getElementById("trace").setAttribute("d", d);
}

draw_grid();
draw_trace();
```
